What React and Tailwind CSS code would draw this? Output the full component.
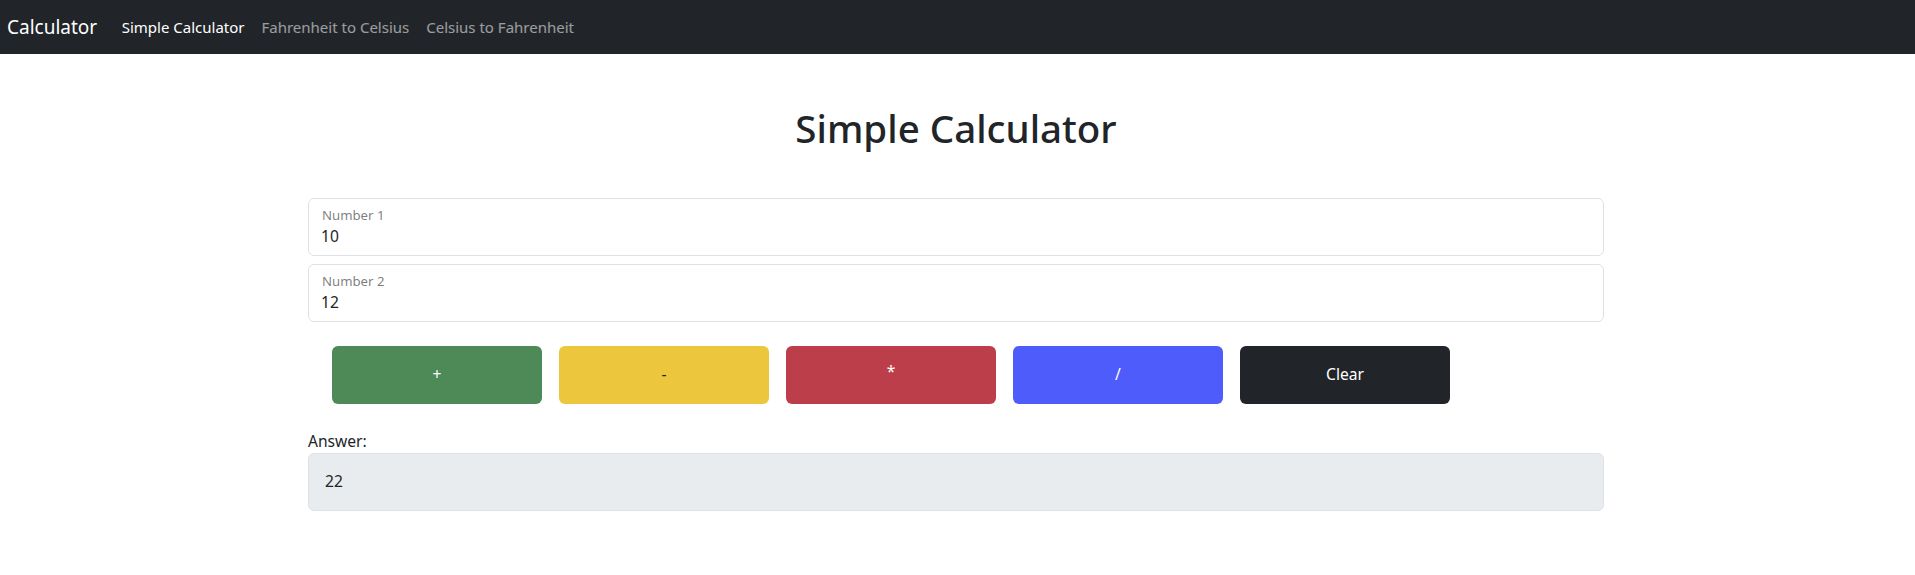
import React, { useState } from "react";

const font = { fontFamily: '"Noto Sans", "Open Sans", sans-serif' };

function Navbar() {
  return (
    <nav className="h-[54px] bg-[#212529] flex items-center px-[7px]">
      <span className="text-[19px] text-white mr-[16px]">Calculator</span>
      <a className="px-[8.5px] text-[15px] text-white">Simple Calculator</a>
      <a className="px-[8.5px] text-[15px] text-white/55">Fahrenheit to Celsius</a>
      <a className="px-[8.5px] text-[15px] text-white/55">Celsius to Fahrenheit</a>
    </nav>
  );
}

function FloatingInput({ label, value, onChange }) {
  return (
    <div className="relative h-[58px] border border-[#dee2e6] rounded-[6px] bg-white">
      <label className="absolute left-[13px] top-[7px] text-[13.2px] leading-[18px] text-[#212529]/60">
        {label}
      </label>
      <input
        type="number"
        value={value}
        onChange={(e) => onChange(e.target.value)}
        className="absolute inset-0 w-full h-full bg-transparent pt-[26px] pb-[8px] px-[12px] text-[15.6px] text-[#212529] outline-none"
      />
    </div>
  );
}

export default function App() {
  const [num1, setNum1] = useState("10");
  const [num2, setNum2] = useState("12");
  const [answer, setAnswer] = useState("22");

  const calc = (op) => {
    const a = parseFloat(num1);
    const b = parseFloat(num2);
    if (op === "+") setAnswer(String(a + b));
    if (op === "-") setAnswer(String(a - b));
    if (op === "*") setAnswer(String(a * b));
    if (op === "/") setAnswer(String(a / b));
  };

  const clear = () => {
    setNum1("");
    setNum2("");
    setAnswer("");
  };

  const buttons = [
    { label: "+", cls: "bg-[#4e8a58] text-white", onClick: () => calc("+") },
    { label: "-", cls: "bg-[#ecc63c] text-[#212529]", onClick: () => calc("-") },
    { label: "*", cls: "bg-[#bd3e4b] text-white text-[13px] pb-[6px]", onClick: () => calc("*") },
    { label: "/", cls: "bg-[#4f5cfc] text-white", onClick: () => calc("/") },
    { label: "Clear", cls: "bg-[#212529] text-white", onClick: clear },
  ];

  return (
    <div style={font} className="min-h-screen bg-white text-[#212529]">
      <Navbar />
      <div className="flex justify-center pr-[3px]">
        <div className="w-[1296px]">
          <h1 className="mt-[50px] mb-[46px] text-center text-[38.5px] leading-[48px] font-medium">
            Simple Calculator
          </h1>
          <div className="flex flex-col gap-2">
            <FloatingInput label="Number 1" value={num1} onChange={setNum1} />
            <FloatingInput label="Number 2" value={num2} onChange={setNum2} />
          </div>
          <div className="flex gap-[17px] pl-[24px] mt-[24px]">
            {buttons.map((b) => (
              <button
                key={b.label}
                onClick={b.onClick}
                className={`w-[210px] h-[58px] rounded-[6px] text-[15.6px] ${b.cls}`}
              >
                {b.label}
              </button>
            ))}
          </div>
          <div className="mt-[25px]">
            <div className="text-[15.6px] leading-[24px]">Answer:</div>
            <div className="h-[58px] border border-[#dee2e6] rounded-[6px] bg-[#e9ecef] flex items-center px-[16px] text-[15.6px]">
              {answer}
            </div>
          </div>
        </div>
      </div>
    </div>
  );
}
